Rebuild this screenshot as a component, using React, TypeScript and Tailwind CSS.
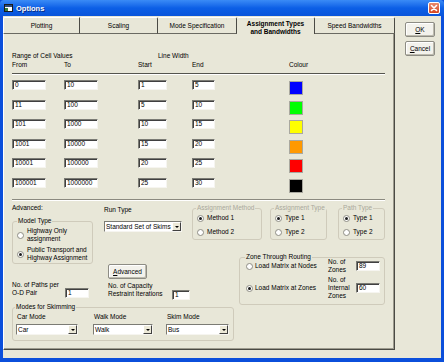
import React from "react";

function Radio({ checked }: { checked?: boolean }) {
  return (
    <span className="w-[7px] h-[7px] rounded-full border border-[#8e8d84] bg-white flex items-center justify-center shrink-0">
      {checked ? <span className="w-[3px] h-[3px] rounded-full bg-[#1e1e1e]" /> : null}
    </span>
  );
}

function Field({ value, className }: { value: string; className: string }) {
  return (
    <div
      className={`h-[10px] bg-white border border-t-[#7b7b74] border-l-[#7b7b74] border-b-[#f6f5f0] border-r-[#f6f5f0] shadow-[inset_1px_1px_0_#404040] pl-[2px] leading-[8px] overflow-hidden whitespace-nowrap shrink-0 ${className}`}
    >
      {value}
    </div>
  );
}

function Combo({ text, className }: { text: string; className: string }) {
  return (
    <div
      className={`h-[11px] bg-white border border-t-[#7b7b74] border-l-[#7b7b74] border-b-[#f6f5f0] border-r-[#f6f5f0] flex items-stretch shrink-0 ${className}`}
    >
      <span className="flex-1 pl-[1px] leading-[9px] overflow-hidden whitespace-nowrap">{text}</span>
      <span className="w-[9px] bg-[#ECE9D8] border border-t-white border-l-white border-b-[#404040] border-r-[#404040] flex items-center justify-center">
        <span className="w-0 h-0 border-l-[2px] border-r-[2px] border-t-[2px] border-l-transparent border-r-transparent border-t-black" />
      </span>
    </div>
  );
}

function Btn({ children, className }: { children: React.ReactNode; className: string }) {
  return (
    <div
      className={`flex items-center justify-center bg-[#F3F2EC] border border-[#8d8c84] rounded-[2px] shadow-[inset_-1px_-1px_0_#bdbbae,inset_1px_1px_0_#ffffff] leading-[8px] shrink-0 ${className}`}
    >
      {children}
    </div>
  );
}

const rows: [string, string, string, string, string][] = [
  ["0", "10", "1", "5", "bg-[#0000FF]"],
  ["11", "100", "5", "10", "bg-[#00FF00]"],
  ["101", "1000", "10", "15", "bg-[#FFFF00]"],
  ["1001", "10000", "15", "20", "bg-[#FF9900]"],
  ["10001", "100000", "20", "25", "bg-[#FF0000]"],
  ["100001", "1000000", "25", "30", "bg-black"],
];

function RadioLine({ label, checked }: { label: string; checked?: boolean }) {
  return (
    <div className="flex items-center gap-[3px] h-[8px] leading-[8px] whitespace-nowrap">
      <Radio checked={checked} />
      <span>{label}</span>
    </div>
  );
}

function SmallGroup({
  legend,
  className,
  a,
  b,
}: {
  legend: string;
  className: string;
  a: string;
  b: string;
}) {
  return (
    <fieldset className={`border border-[#CFCBBB] rounded-[3px] pl-[4px] pb-[3px] shrink-0 ${className}`}>
      <legend className="px-[1px] -ml-[1px] leading-[8px] text-[#A9A79B] whitespace-nowrap">{legend}</legend>
      <div className="mt-[2px]">
        <RadioLine label={a} checked />
      </div>
      <div className="mt-[6px]">
        <RadioLine label={b} />
      </div>
    </fieldset>
  );
}

export default function App() {
  return (
    <div className="w-[444px] h-[362px] flex flex-col bg-[#0B4FDB] font-['Liberation_Sans',Arial,sans-serif] text-[6.5px] text-black overflow-hidden">
      {/* Title bar */}
      <div className="h-[16px] shrink-0 flex items-center pl-[4px] pr-[4px] bg-gradient-to-b from-[#3A8BF6] via-[#0C5FE6] to-[#0A55DA] rounded-t-[4px]">
        <svg width="9" height="8" viewBox="0 0 9 8" className="shrink-0">
          <rect x="0.5" y="0.5" width="8" height="7" fill="#ffffff" stroke="#1a1a1a" />
          <rect x="1" y="1" width="7" height="2" fill="#2c4a7a" />
          <rect x="1" y="4" width="3" height="3" fill="#3b7d3b" />
        </svg>
        <span className="ml-[3px] text-white font-bold text-[7.5px] leading-[9px] [text-shadow:1px_1px_0_#0a2a80]">Options</span>
        <div className="flex-1" />
        <div className="w-[12px] h-[12px] rounded-[2px] border border-white bg-gradient-to-b from-[#E88A6C] to-[#D4431C] flex items-center justify-center">
          <svg width="8" height="8" viewBox="0 0 8 8">
            <path d="M1.5 1.5 L6.5 6.5 M6.5 1.5 L1.5 6.5" stroke="#ffffff" strokeWidth="1.6" strokeLinecap="round" />
          </svg>
        </div>
      </div>

      {/* Body */}
      <div className="flex-1 flex px-[3px] pb-[4px]">
        <div className="flex-1 bg-[#E8E7D8] flex">
          {/* Tab control */}
          <div className="w-[392px] flex flex-col pt-[1px] pb-[8px]">
            <div className="h-[17px] flex shrink-0">
              <div className="w-[77px] border-t border-l border-r border-b border-t-[#ffffff] border-l-[#ffffff] border-r-[#4a4a44] border-b-[#6a6a62] rounded-tl-[2px] flex items-center justify-center leading-[8px]">
                Plotting
              </div>
              <div className="w-[78px] border-t border-r border-b border-t-[#ffffff] border-r-[#4a4a44] border-b-[#6a6a62] rounded-t-[2px] flex items-center justify-center leading-[8px]">
                Scaling
              </div>
              <div className="w-[79px] border-t border-r border-b border-t-[#ffffff] border-r-[#4a4a44] border-b-[#6a6a62] rounded-t-[2px] flex items-center justify-center leading-[8px] whitespace-nowrap">
                Mode Specification
              </div>
              <div className="w-[78px] border-t border-r border-t-[#ffffff] border-r-[#4a4a44] rounded-t-[2px] flex flex-col items-center pt-[2px] leading-[7.5px] font-bold whitespace-nowrap">
                <span>Assignment Types</span>
                <span>and Bandwidths</span>
              </div>
              <div className="w-[80px] border-t border-r border-b border-t-[#ffffff] border-r-[#4a4a44] border-b-[#6a6a62] rounded-tr-[2px] flex items-center justify-center leading-[8px] whitespace-nowrap">
                Speed Bandwidths
              </div>
            </div>

            {/* Panel */}
            <div className="flex-1 border-l border-r border-b border-l-[#ffffff] border-r-[#4a4a44] border-b-[#4a4a44] shadow-[inset_-1px_-1px_0_#9d9b8e] pl-[8px] pr-[9px] pt-[18px] flex flex-col">
              <div className="flex leading-[8px] whitespace-nowrap">
                <div className="w-[146px]">Range of Cell Values</div>
                <div>Line Width</div>
              </div>
              <div className="grid grid-cols-[52px_74px_54px_97px_auto] leading-[8px] mt-[1px]">
                <div>From</div>
                <div>To</div>
                <div>Start</div>
                <div>End</div>
                <div>Colour</div>
              </div>
              <div className="mt-[4px] h-[2px] border-t border-b border-t-[#55554e] border-b-white" />

              <div className="mt-[5px] flex flex-col gap-[4.5px]">
                {rows.map((r) => (
                  <div key={r[0]} className="h-[15px] grid grid-cols-[52px_74px_54px_97px_14px] items-start">
                    <Field value={r[0]} className="w-[34px]" />
                    <Field value={r[1]} className="w-[34px]" />
                    <Field value={r[2]} className="w-[29px]" />
                    <Field value={r[3]} className="w-[23px]" />
                    <div className={`mt-[1px] w-[14px] h-[14px] border border-[#a9a89f] ${r[4]}`} />
                  </div>
                ))}
              </div>

              <div className="mt-[6.5px] h-[2px] border-t border-b border-t-[#8b8a80] border-b-white shrink-0" />

              {/* Bottom section */}
              <div className="flex">
                {/* left column */}
                <div className="w-[178px] flex flex-col">
                  <div className="flex">
                    <div className="w-[81px] flex flex-col">
                      <div className="mt-[3px] leading-[8px]">Advanced:</div>
                      <fieldset className="mt-[5px] border border-[#CFCBBB] rounded-[3px] pl-[4px] pb-[1px] w-[81px]">
                        <legend className="px-[1px] leading-[8px] whitespace-nowrap">Model Type</legend>
                        <div className="flex items-center gap-[3px] mt-[2px]">
                          <Radio />
                          <div className="leading-[8px] whitespace-nowrap">
                            Highway Only
                            <br />
                            assignment
                          </div>
                        </div>
                        <div className="flex items-center gap-[3px] mt-[3px]">
                          <Radio checked />
                          <div className="leading-[8px] whitespace-nowrap">
                            Public Transport and
                            <br />
                            Highway Assignment
                          </div>
                        </div>
                      </fieldset>
                    </div>
                    <div className="ml-[11px] w-[78px] flex flex-col">
                      <div className="mt-[5px] leading-[8px]">Run Type</div>
                      <Combo text="Standard Set of Skims" className="mt-[7px] w-[78px]" />
                    </div>
                  </div>

                  <Btn className="ml-[96px] w-[39px] h-[15px]">
                    <span>
                      <span className="underline">A</span>dvanced
                    </span>
                  </Btn>

                  <div className="flex mt-[2px] items-start">
                    <div className="w-[53px] leading-[8px] whitespace-nowrap">
                      No. of Paths per
                      <br />
                      O-D Pair
                    </div>
                    <Field value="1" className="w-[24px] mt-[7px]" />
                    <div className="ml-[19px] w-[64px] leading-[8px] mt-[1px] whitespace-nowrap">
                      No. of Capacity
                      <br />
                      Restraint Iterations
                    </div>
                    <Field value="1" className="w-[18px] mt-[9px]" />
                  </div>
                </div>

                {/* right column */}
                <div className="ml-[2px] w-[193px] flex flex-col">
                  <div className="flex mt-[3px]">
                    <SmallGroup legend="Assignment Method" className="w-[70px]" a="Method 1" b="Method 2" />
                    <SmallGroup legend="Assignment Type" className="w-[57px] ml-[8px]" a="Type 1" b="Type 2" />
                    <SmallGroup legend="Path Type" className="w-[47px] ml-[11px]" a="Type 1" b="Type 2" />
                  </div>

                  <fieldset className="ml-[47px] w-[146px] mt-[13px] border border-[#CFCBBB] rounded-[3px] pl-[5px] pb-[4px]">
                    <legend className="px-[1px] leading-[8px] whitespace-nowrap">Zone Through Routing</legend>
                    <div className="-mt-[3px] h-[16px] flex items-center">
                      <div className="w-[83px] flex items-center gap-[2px] pl-[1px] whitespace-nowrap">
                        <Radio />
                        <span>Load Matrix at Nodes</span>
                      </div>
                      <div className="w-[28px] leading-[8px] whitespace-nowrap">
                        No. of
                        <br />
                        Zones
                      </div>
                      <Field value="89" className="w-[24px]" />
                    </div>
                    <div className="mt-[2px] h-[24px] flex items-center">
                      <div className="w-[83px] flex items-center gap-[2px] pl-[1px] whitespace-nowrap">
                        <Radio checked />
                        <span>Load Matrix at Zones</span>
                      </div>
                      <div className="w-[28px] leading-[8px] whitespace-nowrap">
                        No. of
                        <br />
                        Internal
                        <br />
                        Zones
                      </div>
                      <Field value="60" className="w-[24px]" />
                    </div>
                  </fieldset>
                </div>
              </div>

              <fieldset className="-mt-[2px] w-[222px] border border-[#CFCBBB] rounded-[3px] pl-[2px] pb-[5px]">
                <legend className="px-[1px] leading-[8px] whitespace-nowrap">Modes for Skimming</legend>
                <div className="flex">
                  <div className="ml-[1px] w-[62px] flex flex-col">
                    <div className="mt-[2px] pl-[1px] leading-[8px]">Car Mode</div>
                    <Combo text="Car" className="mt-[3px] w-[62px]" />
                  </div>
                  <div className="ml-[15px] w-[60px] flex flex-col">
                    <div className="mt-[2px] pl-[1px] leading-[8px]">Walk Mode</div>
                    <Combo text="Walk" className="mt-[3px] w-[60px]" />
                  </div>
                  <div className="ml-[13px] w-[63px] flex flex-col">
                    <div className="mt-[2px] pl-[1px] leading-[8px]">Skim Mode</div>
                    <Combo text="Bus" className="mt-[3px] w-[63px]" />
                  </div>
                </div>
              </fieldset>
            </div>
          </div>

          {/* Buttons column */}
          <div className="ml-[10px] flex flex-col pt-[6px] gap-[4px]">
            <Btn className="w-[30px] h-[15px]">
              <span>
                <span className="underline">O</span>K
              </span>
            </Btn>
            <Btn className="w-[30px] h-[15px]">
              <span>
                <span className="underline">C</span>ancel
              </span>
            </Btn>
          </div>
        </div>
      </div>
    </div>
  );
}
